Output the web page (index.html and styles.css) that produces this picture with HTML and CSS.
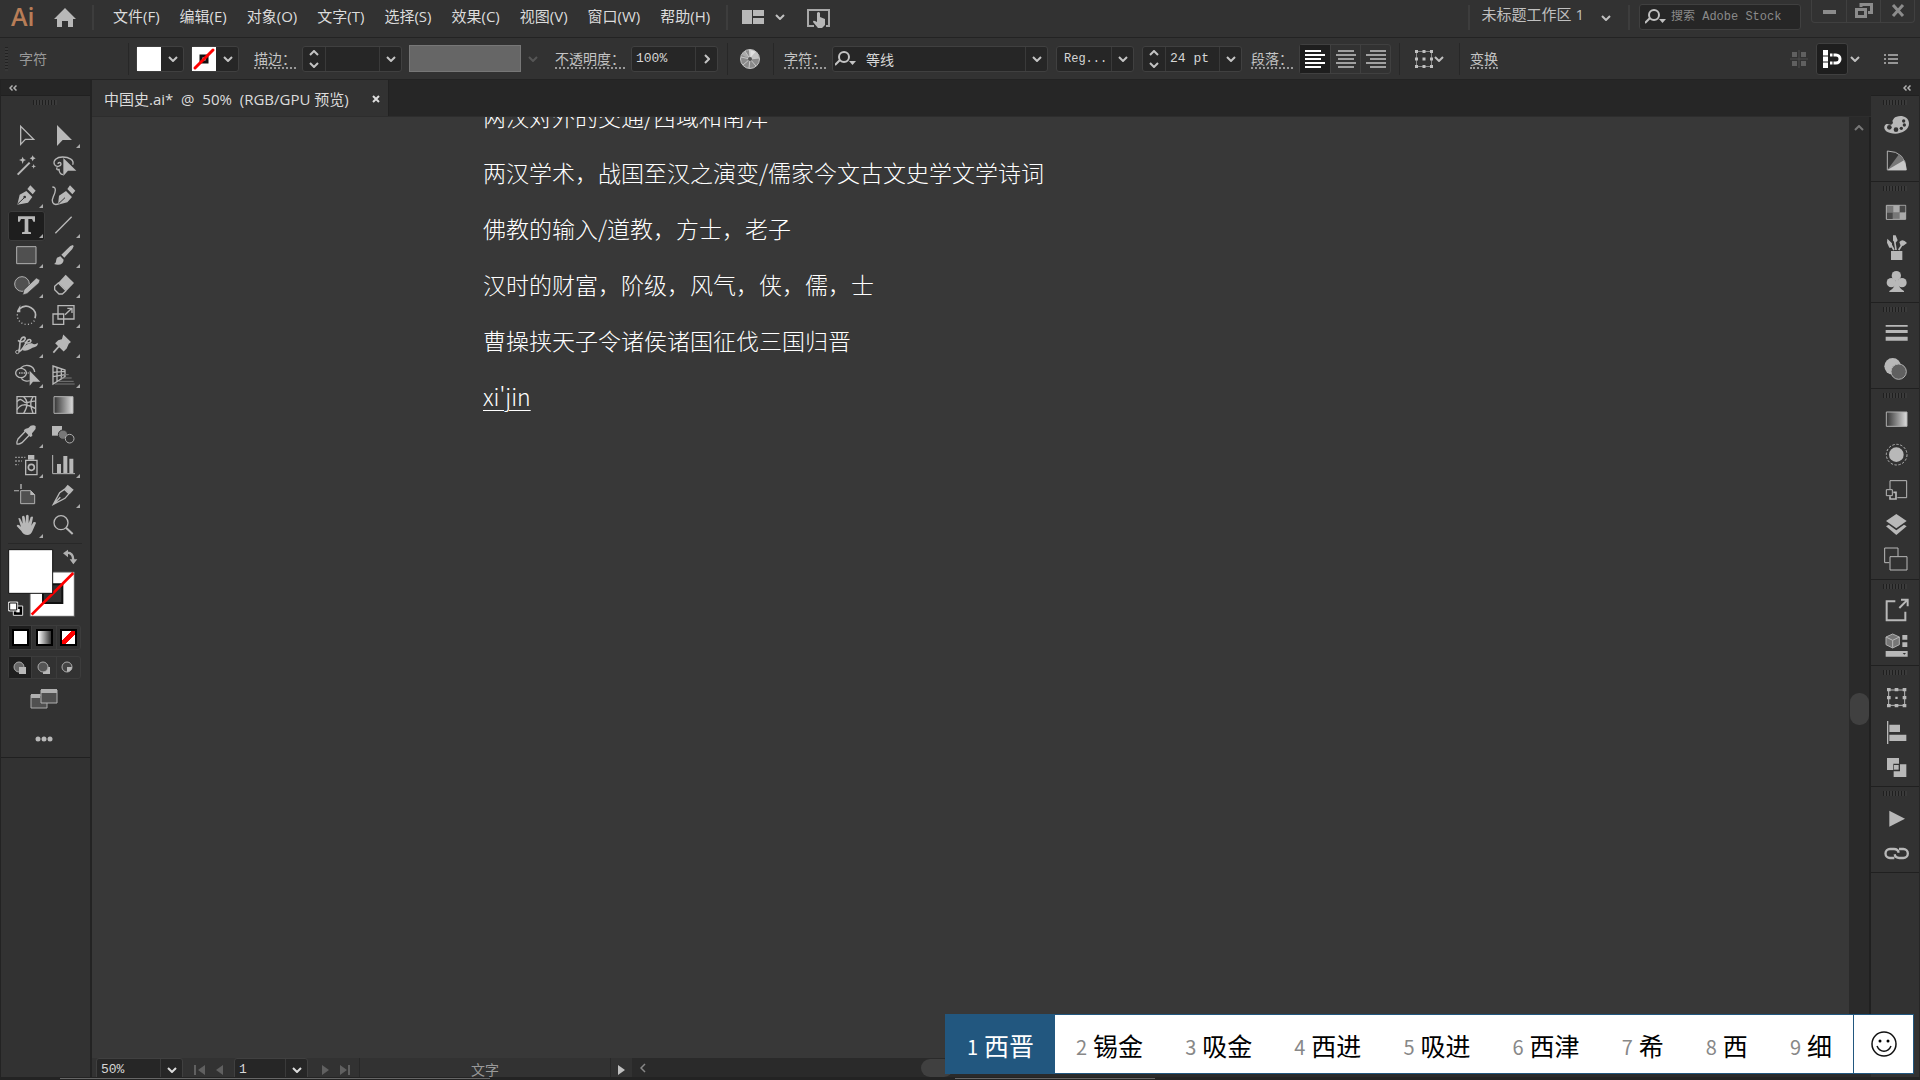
FILE: index.html
```
<!DOCTYPE html>
<html lang="zh-CN">
<head>
    <meta charset="UTF-8">
    <meta name="viewport" content="width=device-width, initial-scale=1.0">
    <title>中国史.ai</title>
    <link rel="stylesheet" href="styles.css">
</head>
<body>
    <svg class="defs" aria-hidden="true">
        <symbol id="down" viewBox="0 0 10 6"><path d="M1 1l4 4 4-4" fill="none" stroke="currentColor" stroke-width="2"/></symbol>
        <symbol id="up" viewBox="0 0 10 6"><path d="M1 5l4-4 4 4" fill="none" stroke="currentColor" stroke-width="2"/></symbol>
        <symbol id="find" viewBox="0 0 22 16"><g fill="none" stroke="currentColor" stroke-width="2"><circle cx="9" cy="6" r="5"/><path d="M5 9l-5 5"/></g><path d="M14 10h7l-3.500 4z" fill="currentColor"/></symbol>
        <symbol id="collapse" viewBox="0 0 8 6"><path d="M3.500 0.500L1 3l2.500 2.500M7.500 0.500L5 3l2.500 2.500" fill="none" stroke="currentColor" stroke-width="1.500"/></symbol>
    </svg>

    <!-- Меню -->
    <header class="menubar">
        <span class="logo">Ai</span>
        <button class="icon-btn home" aria-label="主页"><svg width="22" height="20" viewBox="0 0 22 20"><path d="M11 0l11 11h-3v8h-5v-6H8v6H3v-8H0z" fill="#b8b8b8"/></svg></button>
        <span class="sep"></span>
        <nav class="menu">
            <button>文件(F)</button>
            <button>编辑(E)</button>
            <button>对象(O)</button>
            <button>文字(T)</button>
            <button>选择(S)</button>
            <button>效果(C)</button>
            <button>视图(V)</button>
            <button>窗口(W)</button>
            <button>帮助(H)</button>
        </nav>
        <span class="sep"></span>
        <button class="icon-btn arrange" aria-label="排列文档">
            <svg width="22" height="15" viewBox="0 0 22 15"><path d="M0 0h10v14H0zM11 0h11v6H11zM11 8h11v6H11z" fill="#b8b8b8"/></svg>
            <svg width="10" height="6"><use href="#down"/></svg>
        </button>
        <button class="icon-btn touch" aria-label="触控"><svg width="23" height="19" viewBox="0 0 23 19"><path d="M7 17H1V1h21v16h-3" fill="none" stroke="#a8a8a8" stroke-width="2"/><path d="M10 4q1.500-2 3 0v4l5 2v6l-3 3h-4l-5-6q0-2 2-1l2 1z" fill="#b8b8b8"/></svg></button>
        <span class="grow"></span>
        <span class="sep"></span>
        <button class="icon-btn workspace">未标题工作区 1 <svg width="10" height="6"><use href="#down"/></svg></button>
        <span class="sep"></span>
        <label class="search"><svg width="22" height="16"><use href="#find"/></svg><input type="text" placeholder="搜索 Adobe Stock" aria-label="搜索 Adobe Stock"></label>
        <div class="window-btns">
            <button aria-label="最小化"><svg width="18" height="16"><path d="M3 7h13v4H3z" fill="#8c8c8c"/></svg></button>
            <button aria-label="还原"><svg width="18" height="16" fill="none" stroke="#8c8c8c" stroke-width="3"><path d="M6 4V1.500h10.500v8H13"/><path d="M1.500 6.500h9v7h-9z"/></svg></button>
            <button aria-label="关闭"><svg width="18" height="16"><path d="M4 2l10 11M14 2L4 13" stroke="#8c8c8c" stroke-width="3"/></svg></button>
        </div>
    </header>

    <!-- Панель управления -->
    <section class="control">
        <span class="grip-v"></span>
        <span class="title">字符</span>
        <span class="sep"></span>
        <button class="swatch" aria-label="填色"><i class="chip"></i><svg width="10" height="6"><use href="#down"/></svg></button>
        <button class="swatch" aria-label="描边色"><svg class="chip" width="24" height="24" viewBox="0 0 24 24"><path d="M0 0h24v24H0z" fill="#fff"/><path d="M9 9h6v6H9z" fill="#fff" stroke="#111" stroke-width="3"/><path d="M3 21L21 3" stroke="#f00" stroke-width="3" stroke-linecap="round"/></svg><svg width="10" height="6"><use href="#down"/></svg></button>
        <label class="name" for="stroke">描边：</label>
        <div class="combo">
            <button class="step" aria-label="增减"><svg width="10" height="6"><use href="#up"/></svg><svg width="10" height="6"><use href="#down"/></svg></button>
            <input id="stroke" class="w54" type="text">
            <button aria-label="描边粗细"><svg width="10" height="6"><use href="#down"/></svg></button>
        </div>
        <button class="profile" aria-label="配置文件" disabled><i></i><svg width="10" height="6"><use href="#down"/></svg></button>
        <label class="name" for="opacity">不透明度：</label>
        <div class="combo">
            <input id="opacity" class="w64" type="text" value="100%">
            <button aria-label="不透明度滑块"><svg width="6" height="10"><path d="M1 1l4 4-4 4" fill="none" stroke="currentColor" stroke-width="2"/></svg></button>
        </div>
        <span class="sep"></span>
        <button class="icon-btn recolor" aria-label="重新着色"><svg width="20" height="20" viewBox="0 0 20 20"><circle cx="10" cy="10" r="9.500" fill="#8a8a8a" stroke="#c4c4c4"/><path d="M10 10L9 1a9 9 0 017 2z" fill="#e0e0e0"/><path d="M10 10l6-7a9 9 0 013 6z" fill="#c4c4c4"/><path d="M10 10L2 6a9 9 0 013-4z" fill="#aaa"/><path d="M10 10l9-1M10 10l6 7M10 10l-1 9M10 10l-7 6M10 10L1 8M10 10L5 2M10 10l0-9M10 10l6-7" stroke="#c8c8c8"/><circle cx="10" cy="10" r="2" fill="#555"/></svg></button>
        <span class="sep"></span>
        <label class="name" for="font">字符：</label>
        <div class="combo font">
            <svg width="22" height="16"><use href="#find"/></svg>
            <input id="font" type="text" value="等线">
            <button aria-label="字体列表"><svg width="10" height="6"><use href="#down"/></svg></button>
        </div>
        <div class="combo">
            <input class="w54 small" type="text" value="Reg..." aria-label="字体样式">
            <button aria-label="样式列表"><svg width="10" height="6"><use href="#down"/></svg></button>
        </div>
        <div class="combo">
            <button class="step" aria-label="增减"><svg width="10" height="6"><use href="#up"/></svg><svg width="10" height="6"><use href="#down"/></svg></button>
            <input class="w54" type="text" value="24 pt" aria-label="字号">
            <button aria-label="字号列表"><svg width="10" height="6"><use href="#down"/></svg></button>
        </div>
        <a class="name" href="#">段落：</a>
        <div class="align">
            <button class="active" aria-label="左对齐"><svg width="20" height="18" viewBox="0 0 20 18"><path d="M0 1h16M0 5h20M0 9h16M0 13h20M0 17h16"/></svg></button>
            <button aria-label="居中对齐"><svg width="20" height="18" viewBox="0 0 20 18"><path d="M2 1h16M0 5h20M2 9h16M0 13h20M2 17h16"/></svg></button>
            <button aria-label="右对齐"><svg width="20" height="18" viewBox="0 0 20 18"><path d="M4 1h16M0 5h20M4 9h16M0 13h20M4 17h16"/></svg></button>
        </div>
        <span class="sep"></span>
        <button class="icon-btn envelope" aria-label="制作封套"><svg width="18" height="18" viewBox="0 0 18 18"><path d="M1.500 1.500h15v15h-15z" fill="none" stroke="#888"/><path d="M0 0h3v3H0zM7.500 0h3v3h-3zM15 0h3v3h-3zM0 7.500h3v3H0zM7.500 7.500h3v3h-3zM15 7.500h3v3h-3zM0 15h3v3H0zM7.500 15h3v3h-3zM15 15h3v3h-3z" fill="#c0c0c0"/></svg><svg width="10" height="6"><use href="#down"/></svg></button>
        <span class="sep"></span>
        <a class="name" href="#">变换</a>
        <span class="grow"></span>
        <button class="icon-btn" aria-label="对齐像素" disabled><svg width="18" height="18" viewBox="0 0 18 18"><path d="M2 2h5v5H2zM11 2h5v5h-5zM2 11h5v5H2zM11 11h5v5h-5z" fill="#606060"/><path d="M9 0v18M0 9h18" stroke="#4c4c4c"/></svg></button>
        <button class="snap" aria-label="对齐"><svg width="20" height="20" viewBox="0 0 20 20"><path d="M1 1h5v18H1z" fill="#fff"/><path d="M1 7h5M1 13h5" stroke="#222"/><path d="M8 6h6a4 4 0 010 8H8" fill="none" stroke="#fff" stroke-width="3"/><path d="M11 4v12" stroke="#222"/></svg></button>
        <button class="icon-btn more" aria-label="对齐选项"><svg width="10" height="6"><use href="#down"/></svg></button>
        <button class="icon-btn list" aria-label="面板菜单"><svg width="14" height="10" viewBox="0 0 14 10"><path d="M0 1h2M4 1h10M0 5h2M4 5h10M0 9h2M4 9h10" stroke="#b8b8b8" stroke-width="1.500"/></svg></button>
    </section>

    <main class="main">
        <!-- Инструменты -->
        <aside class="tools">
            <button class="collapse" aria-label="折叠"><svg width="8" height="6"><use href="#collapse"/></svg></button>
            <div class="tools-body">
                <span class="grip"></span>
                <div class="tool-grid">
                    <button aria-label="选择"><svg viewBox="24 123 111 90"><path d="M62 139v54l14-15h25z" class="line w4"/></svg></button>
                    <button class="sub" aria-label="直接选择"><svg viewBox="135 123 111 90"><path d="M171 135v63l17-18h28z"/></svg></button>
                    <button aria-label="魔棒"><svg viewBox="24 213 111 90"><path d="M53 284l36-36" class="line w6"/><path d="M68 230l3 7 7 3-7 3-3 9-3-9-8-3 8-3zM98 226l3 6 6 3-6 3-3 6-3-6-6-3 6-3zM101 252l2 5 5 2-5 2-2 5-2-5-5-2 5-2z"/></svg></button>
                    <button aria-label="套索"><svg viewBox="135 213 111 90"><path d="M218 254c6-14-11-23-30-23s-29 11-25 22c4 10 20 6 20-1 0-6-9-6-9 0M172 262c-6 8 5 10 5 4 0 9 2 16 12 18" class="line w4"/><path d="M190 234v54l14-16h25z"/></svg></button>
                    <button class="sub" aria-label="钢笔"><svg viewBox="24 303 111 90"><path d="M52 374l7-30 20-11 18 18-13 17zM82 327l9-11 16 16-9 11z"/><path d="M53 372l19-18" stroke="#323232" stroke-width="3"/><circle cx="74" cy="351" r="4" fill="#323232"/></svg></button>
                    <button aria-label="曲率"><svg viewBox="135 303 111 90"><path d="M157 321c14 0 9 17 3 29s-4 28 15 22" class="line w4"/><path d="M174 374l3-27 21-14 18 18-14 16zM202 327l8-11 16 16-9 11z"/><path d="M176 371l19-18" stroke="#323232" stroke-width="3"/></svg></button>
                    <button class="sub active" aria-label="文字"><svg viewBox="24 393 111 90"><path d="M54 409h51v16h-5l-4-8H85v38l8 2v5H66v-5l8-2v-38H63l-4 8h-5z"/></svg></button>
                    <button class="sub" aria-label="直线段"><svg viewBox="135 393 111 90"><path d="M166 460l49-50" class="line w4"/></svg></button>
                    <button class="sub" aria-label="矩形"><svg viewBox="24 483 111 90"><path d="M50 500h58v51H50z" fill="#505050" class="edge"/></svg></button>
                    <button class="sub" aria-label="画笔"><svg viewBox="135 483 111 90"><path d="M184 524l27-26 8-3 2 4-4 8-24 26zM181 529l10 10c-1 13-12 19-29 13 8-3 5-12 9-19z"/></svg></button>
                    <button class="sub" aria-label="Shaper"><svg viewBox="24 573 111 90"><circle cx="66" cy="612" r="22" fill="#505050" class="edge"/><path d="M68 645l4-16 37-35 11 6-3 9-36 32z" stroke="#323232" stroke-width="2"/></svg></button>
                    <button class="sub" aria-label="橡皮擦"><svg viewBox="135 573 111 90"><path d="M197 584l25 25-22 23-25-24z"/><path d="M175 609l-11 10v10l13 13h10l11-10z" class="line w4"/></svg></button>
                    <button class="sub" aria-label="旋转"><svg viewBox="24 663 111 90"><path d="M58 687c22-20 56 0 47 28" class="line w5"/><path d="M61 675v22H51v-5z"/><path d="M52 703c-2 34 43 40 53 15" class="line w4" stroke-dasharray="3 7"/></svg></button>
                    <button class="sub" aria-label="缩放"><svg viewBox="135 663 111 90"><path d="M174 677h48v40h-48zM159 702h32v31h-32z" class="line w4"/><path d="M195 704l19-18M202 685h14v14" class="line w4"/></svg></button>
                    <button class="sub" aria-label="宽度"><svg viewBox="24 -27 111 90"><path d="M52 36c12-6 4-24 10-36 5-12 16-10 13-2-4 9-14 9-21 3M53 36c14 0 20-20 29-34 6-7 14-2 9 4-5 5-12 3-17 1" class="line w5"/><path d="M66 30q12-22 30-20 8 6 17-2 2 9-8 13-8 2-14 6-14 8-25 3z"/><circle cx="52" cy="36" r="5" fill="#323232" class="edge"/></svg></button>
                    <button class="sub" aria-label="操控变形"><svg viewBox="135 -27 111 90"><path d="M191-12l18 18-5 4-6 14-7 7-22-21 7-7 12-4zM176 20l-16 18" stroke="#b8b8b8" stroke-width="5"/></svg></button>
                    <button class="sub" aria-label="形状生成器"><svg viewBox="24 63 111 90"><ellipse cx="63" cy="99" rx="16" ry="14" class="line w4"/><path d="M62 84c15-14 40-8 42 12M64 115c6 8 17 10 25 7" class="line w4"/><path d="M57 99h30" class="line w4" stroke-dasharray="4 3"/><path d="M89 92v45l10-12h22z"/></svg></button>
                    <button class="sub" aria-label="透视网格"><svg viewBox="135 63 111 90"><path d="M159 78v54l36-22V90zM159 97l36-3M159 110l36-6M171 82v42M184 86v30" class="line w4"/><path d="M193 104h13M184 114h31M176 124h45M164 132h60" stroke="#777" stroke-width="3"/></svg></button>
                    <button aria-label="网格"><svg viewBox="24 153 111 90"><path d="M51 170h56v50H51z" class="line w4"/><path d="M71 170c16 14 10 34 0 50M99 170c-10 13-8 30 0 50M51 185c12-14 15-2 24 2s20-6 32-3M51 209c12-20 28-18 56-3" class="line w4"/></svg></button>
                    <button aria-label="渐变"><svg viewBox="135 153 111 90"><defs><linearGradient id="g"><stop stop-color="#333"/><stop offset="1" stop-color="#ddd"/></linearGradient></defs><path d="M162 170h57v50h-57z" fill="url(#g)" class="edge"/></svg></button>
                    <button class="sub" aria-label="吸管"><svg viewBox="24 243 111 90"><path d="M79 271l-25 26q-5 10-3 15 6 2 15-4l26-27" class="line w4"/><path d="M77 266l8-2 7-7q10-4 15 2 2 9-5 14l-6 7 1 8-6 3-20-20z"/></svg></button>
                    <button aria-label="混合"><svg viewBox="135 243 111 90"><path d="M156 258h30v29h-30z"/><circle cx="189" cy="284" r="14" fill="#777" stroke="#323232" stroke-width="3"/><circle cx="209" cy="296" r="13" fill="#323232" class="edge"/></svg></button>
                    <button class="sub" aria-label="符号喷枪"><svg viewBox="24 333 111 90"><path d="M77 361h34v43H77z" class="line w4"/><path d="M84 345h19v14H84z"/><circle cx="94" cy="382" r="9" class="line w5"/><path d="M46 352h30M46 363h20M46 374h10" class="line w4" stroke-dasharray="4 5"/></svg></button>
                    <button class="sub" aria-label="柱形图"><svg viewBox="135 333 111 90"><path d="M158 345v56h67" class="line w3"/><path d="M171 372h12v27h-12zM190 348h12v51h-12zM208 356h12v43h-12z"/></svg></button>
                    <button aria-label="画板"><svg viewBox="24 423 111 90"><path d="M62 452h30l12 12v27H62z" fill="#505050" class="edge"/><path d="M91 451l14 14H91zM42 451h15v3H42zM61 432h4v15h-4z"/></svg></button>
                    <button class="sub" aria-label="切片"><svg viewBox="135 423 111 90"><path d="M160 493l19-35 14-10 14 13-12 14zM161 492l20-20" class="line w4"/><path d="M193 446l10-12 18 15-12 14z"/></svg></button>
                    <button class="sub" aria-label="抓手"><svg viewBox="24 513 111 90"><path d="M55 535q5-3 8 5l5 11-2-21q4-5 8 0l3 20 1-23q4-5 8 0v23l6-19q6-4 7 1l-5 25 6-10q7-3 8 2l-11 25q-4 11-15 11-12 0-18-12L50 558q2-6 8-2l5 5z"/></svg></button>
                    <button aria-label="缩放显示"><svg viewBox="135 513 111 90"><circle cx="183" cy="548" r="21" class="line w4"/><path d="M198 563l20 19" class="line w6"/></svg></button>
                </div>
                <svg class="colors" width="74" height="72" viewBox="24 24 222 216" role="img" aria-label="填色和描边">
                    <path d="M90 96h133v133H90z" fill="#fff" stroke="#555" stroke-width="3"/><path d="M129 133h58v56h-58z" fill="#323232" stroke="#111" stroke-width="6"/><path d="M95 224L220 99" stroke="#f00" stroke-width="8"/>
                    <path d="M26 29h132v131H26z" fill="#fff" stroke="#111" stroke-width="3"/>
                    <path d="M201 38c14 0 19 8 19 23" fill="none" stroke="#b0b0b0" stroke-width="7"/><path d="M204 29v23l-15-12zM209 58h23l-12 15z" fill="#b0b0b0"/>
                    <path d="M40 198h28v28H40z" fill="#000" stroke="#ddd" stroke-width="3"/><path d="M49 207h10v10H49z" fill="#fff"/><path d="M26 186h27v27H26z" fill="#fff" stroke="#ddd" stroke-width="3"/><path d="M29 189h21v21H29z" fill="#fff" stroke="#111" stroke-width="3"/>
                </svg>
                <div class="modes">
                    <button class="active" aria-label="颜色"><i class="solid"></i></button>
                    <button aria-label="渐变填色"><i class="fade"></i></button>
                    <button aria-label="无"><i class="none"></i></button>
                </div>
                <div class="modes draw">
                    <button class="active" aria-label="正常绘图"><svg width="14" height="14"><circle cx="6" cy="6" r="5" fill="#666" stroke="#aaa"/><path d="M6 6h7v7H6z" fill="#b8b8b8" stroke="none"/></svg></button>
                    <button aria-label="背面绘图"><svg width="14" height="14"><path d="M6 6h7v7H6z" fill="#b8b8b8"/><circle cx="6" cy="6" r="5" fill="#555" stroke="#aaa"/></svg></button>
                    <button aria-label="内部绘图"><svg width="14" height="14"><circle cx="6" cy="6" r="5" fill="#444" stroke="#aaa"/><path d="M6 6h5q0 4-5 5z" fill="#b8b8b8"/></svg></button>
                </div>
                <button class="screen" aria-label="屏幕模式"><svg width="28" height="20"><path d="M1 6h16v13H1z" fill="#505050" stroke="#aaa"/><path d="M1 5h9v4H1z" fill="#b0b0b0"/><path d="M11 1h16v13H11z" fill="#505050" stroke="#b0b0b0"/><path d="M11 0h16v4H11z" fill="#b0b0b0"/></svg></button>
                <button class="dots" aria-label="编辑工具栏"><svg width="18" height="6" fill="#b8b8b8"><circle cx="3" cy="3" r="2.500"/><circle cx="9" cy="3" r="2.500"/><circle cx="15" cy="3" r="2.500"/></svg></button>
            </div>
        </aside>

        <!-- Документ -->
        <section class="document">
            <div class="tabs">
                <div class="tab"><span>中国史.ai*  @  50%  (RGB/GPU 预览)</span><button aria-label="关闭文档"><svg width="8" height="8"><path d="M1 1l6 6M7 1L1 7" stroke="#ddd" stroke-width="2"/></svg></button></div>
            </div>
            <div class="view">
                <article class="canvas">
                    <p>两汉对外的交通/西域和南洋</p>
                    <p>两汉学术，战国至汉之演变/儒家今文古文史学文学诗词</p>
                    <p>佛教的输入/道教，方士，老子</p>
                    <p>汉时的财富，阶级，风气，侠，儒，士</p>
                    <p>曹操挟天子令诸侯诸国征伐三国归晋</p>
                    <p><u>xi'jin</u></p>
                </article>
                <div class="scroll-v"><svg width="10" height="6"><use href="#up"/></svg><i></i></div>
            </div>
            <footer class="status">
                <div class="combo">
                    <input class="w64" type="text" value="50%" aria-label="缩放比例">
                    <button aria-label="缩放列表"><svg width="10" height="6"><use href="#down"/></svg></button>
                </div>
                <button class="nav" aria-label="首页" disabled><svg width="12" height="10"><path d="M0 0h2v10H0zM11 0v10L4 5z"/></svg></button>
                <button class="nav" aria-label="上一页" disabled><svg width="12" height="10"><path d="M9 0v10L2 5z"/></svg></button>
                <div class="combo">
                    <input class="w50" type="text" value="1" aria-label="画板">
                    <button aria-label="画板列表"><svg width="10" height="6"><use href="#down"/></svg></button>
                </div>
                <button class="nav" aria-label="下一页" disabled><svg width="12" height="10"><path d="M3 0v10l7-5z"/></svg></button>
                <button class="nav" aria-label="末页" disabled><svg width="12" height="10"><path d="M1 0v10l7-5zM9 0h2v10H9z"/></svg></button>
                <span class="current">文字</span>
                <button class="play" aria-label="状态菜单"><svg width="8" height="10"><path d="M0 0v10l7-5z"/></svg></button>
                <div class="scroll-h"><svg width="6" height="10"><path d="M5 1L1 5l4 4" fill="none" stroke="#888" stroke-width="1.500"/></svg><i></i></div>
            </footer>
        </section>

        <!-- Панели -->
        <aside class="dock">
            <button class="collapse" aria-label="展开"><svg width="8" height="6"><use href="#collapse"/></svg></button>
            <div class="group"><span class="grip"></span>
                <button aria-label="颜色"><svg viewBox="93 84 147 105"><path d="M162 115c8-10 44-12 45 15 1 24-31 36-56 29-26-7-19-29-8-27 10 6 20-1 14-9z"/><g fill="#323232"><circle cx="148" cy="142" r="7"/><circle cx="168" cy="149" r="7"/><circle cx="184" cy="145" r="5"/><circle cx="193" cy="135" r="5"/><circle cx="191" cy="123" r="5"/></g></svg></button>
                <button aria-label="颜色参考"><svg viewBox="93 189 147 105"><path d="M142 213q55 1 57 57h-57z" fill="#333" class="edge"/><path d="M142 270l35-47q22 18 22 47z" fill="#777"/><path d="M142 270l50-29q7 12 7 29z" fill="#c8c8c8"/></svg></button>
            </div>
            <div class="group"><span class="grip"></span>
                <button aria-label="色板"><svg viewBox="93 342 147 105"><path d="M139 376h58v42h-58z" fill="#777" class="edge"/><path d="M160 377h18v20h-18zM179 398h18v19h-18z" fill="#aaa"/><path d="M180 377h16v19h-16zM141 398h17v19h-17z" fill="#484848"/></svg></button>
                <button aria-label="画笔"><svg viewBox="93 447 147 105"><path d="M153 513h34v27h-34z"/><path d="M162 510l-12-21M168 510l-4-27M176 510l13-20" class="line w5"/><path d="M142 476l14 14-1 13h-7l-7-15zM159 466l8 0 6 15-6 7-8-6zM178 486q10-12 23 3l-11 8h-8z"/></svg></button>
                <button aria-label="符号"><svg viewBox="93 552 147 105"><circle cx="169" cy="587" r="14"/><circle cx="154" cy="608" r="14"/><circle cx="186" cy="608" r="14"/><path d="M166 600h8q0 25 18 33v3h-44v-3q18-8 18-33z"/></svg></button>
            </div>
            <div class="group"><span class="grip"></span>
                <button aria-label="描边"><svg viewBox="93 705 147 105"><path d="M137 735h66v5h-66zM137 750h66v9h-66zM137 770h66v12h-66z"/></svg></button>
                <button aria-label="透明度"><svg viewBox="93 810 147 105"><circle cx="158" cy="859" r="25"/><circle cx="176" cy="875" r="23" fill="#606060" class="edge"/></svg></button>
            </div>
            <div class="group"><span class="grip"></span>
                <button aria-label="渐变"><svg viewBox="93 63 147 105"><path d="M139 96h62v43h-62z" fill="url(#g)" class="edge"/></svg></button>
                <button aria-label="外观"><svg viewBox="93 168 147 105"><circle cx="169" cy="224" r="22"/><circle cx="170" cy="224" r="31" class="line w3" stroke-dasharray="7 5"/></svg></button>
                <button aria-label="资源"><svg viewBox="93 273 147 105"><path d="M150 327v-25h50v51h-28M139 329h18v18h-18z" class="line w3"/><path d="M160 337h8v20h-18v-8" class="line w5"/></svg></button>
                <button aria-label="图层"><svg viewBox="93 378 147 105"><path d="M169 402l31 21-31 22-31-22zM138 439l8-5 23 17 23-17 8 5-31 26z"/></svg></button>
                <button aria-label="画板"><svg viewBox="93 483 147 105"><path d="M148 548h-14v-44h40v25M150 530h51v40h-51z" class="line w3"/></svg></button>
            </div>
            <div class="group"><span class="grip"></span>
                <button aria-label="导出"><svg viewBox="93 636 147 105"><path d="M166 664h-26v57h56v-26" class="line w6"/><path d="M178 684l22-22M183 659h20v20" class="line w6"/></svg></button>
                <button aria-label="库"><svg viewBox="93 741 147 105"><path d="M158 762l20 9v23l-20 10-20-10v-23z" fill="#777" class="edge"/><path d="M138 771l20 10 20-10M158 781v22" class="line w3"/><path d="M187 765h15v14h-15zM187 787h15v14h-15zM137 813h66v17h-66z"/><path d="M188 819h10l-5 5z" fill="#323232"/></svg></button>
            </div>
            <div class="group"><span class="grip"></span>
                <button aria-label="变换"><svg viewBox="93 114 147 105"><path d="M146 150h48v46h-48z" class="line w3"/><path d="M141 144h11v10h-11zM164 144h11v10h-11zM188 144h11v10h-11zM141 168h11v10h-11zM188 168h11v10h-11zM141 192h11v10h-11zM164 192h11v10h-11zM188 192h11v10h-11zM166 170h7v7h-7z"/></svg></button>
                <button aria-label="对齐"><svg viewBox="93 219 147 105"><path d="M141 243h4v69h-4zM148 254h32v22h-32zM148 284h51v19h-51z"/></svg></button>
                <button aria-label="路径查找器"><svg viewBox="93 324 147 105"><path d="M141 354h36v17h-17v19h-19zM180 373h19v38h-38v-17h19z"/><path d="M162 375h14v14h-14z"/></svg></button>
            </div>
            <div class="group"><span class="grip"></span>
                <button aria-label="动作"><svg viewBox="93 477 147 105"><path d="M148 512v48l47-24z"/></svg></button>
                <button aria-label="链接"><svg viewBox="93 582 147 105"><path d="M163 654h-13a13 13 0 010-27h12q12 0 14 11M177 627h13a13 13 0 010 27h-12q-12 0-14-11" class="line w7"/></svg></button>
            </div>
        </aside>
    </main>
    <div class="bottom"><i></i><i></i></div>

    <!-- Окно ввода пиньинь -->
    <div class="ime">
        <button class="active"><b>1</b>西晋</button>
        <button><b>2</b>锡金</button>
        <button><b>3</b>吸金</button>
        <button><b>4</b>西进</button>
        <button><b>5</b>吸进</button>
        <button><b>6</b>西津</button>
        <button><b>7</b>希</button>
        <button><b>8</b>西</button>
        <button><b>9</b>细</button>
        <button class="smile" aria-label="表情"><svg width="26" height="26" viewBox="0 0 26 26"><circle cx="13" cy="13" r="12" fill="none" stroke="#111" stroke-width="1.500"/><circle cx="9" cy="10" r="1.500"/><circle cx="17" cy="10" r="1.500"/><path d="M6 15c3 7 11 7 14 0" fill="none" stroke="#111" stroke-width="1.500"/></svg></button>
    </div>
</body>
</html>
```
FILE: styles.css
```
* { box-sizing: border-box; }
body { margin: 0; height: 100vh; display: flex; flex-direction: column; overflow: hidden; background: #323232; color: #dcdcdc; font: 15px/20px "Open Sans", "Noto Sans CJK SC", sans-serif; }
button, input { font: inherit; color: inherit; background: none; border: 0; margin: 0; padding: 0; outline: none; }
button { cursor: pointer; display: flex; align-items: center; justify-content: center; white-space: nowrap; }
a { color: inherit; text-decoration: none; }
svg { flex: none; display: block; }
.defs { position: absolute; width: 0; height: 0; }
.grow { flex: 1; }
.icon-btn { color: #c0c0c0; }

/* menu */
.menubar { height: 38px; flex: none; display: flex; align-items: flex-start; border-bottom: 1px solid #232323; }
.menubar .sep { width: 2px; height: 25px; margin-top: 5px; background: #3d3d3d; }
.logo { width: 32px; margin-left: 11px; color: #b87d57; font-size: 25px; line-height: 32px; font-weight: 600; }
.home { width: 44px; height: 36px; margin-right: 5px; }
.menu { display: flex; gap: 20px; padding: 0 16px 0 19px; height: 32px; }
.arrange { gap: 11px; height: 34px; margin: 0 22px 0 14px; }
.touch { height: 36px; }
.workspace { gap: 17px; height: 28px; margin: 0 17px 0 12px; }
.workspace svg { margin-top: 8px; }
.search { display: flex; align-items: center; width: 162px; height: 26px; margin: 4px 10px 0 9px; padding-left: 5px; background: #262626; border: 1px solid #404040; border-radius: 3px; color: #c0c0c0; }
.search input { width: 130px; margin-left: 4px; font: 12px "Liberation Mono", "Noto Sans CJK SC", monospace; }
.search input::placeholder { color: #8a8a8a; opacity: 1; }
.window-btns { display: flex; height: 23px; margin-right: 5px; border: 1px solid #404040; border-top: 0; border-radius: 0 0 4px 4px; }
.window-btns button { width: 34px; }
.window-btns button + button { border-left: 1px solid #404040; }

/* control */
.control { height: 42px; flex: none; display: flex; align-items: center; border-bottom: 1px solid #232323; color: #c4c4c4; font-size: 14px; }
.control .sep { width: 1px; height: 32px; background: #272727; }
.grip-v { width: 3px; height: 24px; margin: 0 11px 0 5px; background: repeating-linear-gradient(#222 0 1px, #383838 1px 3px); }
.title { width: 109px; color: #999; }
.swatch { height: 26px; width: 48px; margin-left: 7px; justify-content: flex-start; gap: 7px; background: #262626; border: 1px solid #404040; border-radius: 3px; }
.swatch .chip { width: 24px; height: 24px; background: #fff; }
.name { line-height: 20px; border-bottom: 2px dotted #999; height: 20px; margin: 0 6px 0 9px; white-space: nowrap; }
.swatch + .name { margin-left: 15px; }
.combo { display: flex; height: 26px; background: #262626; border: 1px solid #404040; border-radius: 3px; font-family: "Liberation Mono", "Noto Sans CJK SC", monospace; font-size: 13px; }
.combo button { width: 22px; }
.combo > * + * { border-left: 1px solid #3a3a3a; }
.combo + .combo { margin-left: 8px; }
.combo input { padding-left: 4px; color: #d6d6d6; }
.combo .step { flex-direction: column; gap: 6px; }
.w50 { width: 50px; }
.w54 { width: 54px; }
.w64 { width: 63px; }
.small { font-size: 12px; }
.combo input.small { padding-left: 7px; }
.font { width: 216px; align-items: center; padding-left: 2px; }
.font input { flex: 1; min-width: 0; height: 24px; border: 0; font-size: 14px; padding-left: 9px; }
.font button { height: 24px; }
.profile { margin-left: 7px; color: #555; }
.profile i { width: 112px; height: 27px; margin-right: 7px; background: #666; border: 1px solid #777; }
.profile svg { margin-right: 8px; }
.recolor { margin: 0 13px 0 12px; }
.combo + .sep { margin-left: 9px; }
.sep + .name { margin-left: 10px; }
.align { display: flex; height: 30px; margin-right: 8px; border: 1px solid #404040; border-radius: 3px; }
.align button { width: 30px; stroke: #a0a0a0; stroke-width: 2; }
.align button + button { border-left: 1px solid #404040; }
.align .active, .modes .active { background: #1e1e1e; stroke: #fff; }
.envelope { margin: 0 15px; gap: 1px; }
.snap { width: 32px; height: 32px; margin-left: 8px; background: #1e1e1e; border: 1px solid #404040; border-radius: 3px; }
.more { margin: 0 24px 0 2px; }
.list { margin-right: 22px; }

.main { flex: 1; min-height: 0; display: flex; }
.collapse { height: 16px; flex: none; background: #262626; border-bottom: 1px solid #202020; color: #b0b0b0; }
.grip { display: block; width: 24px; height: 5px; margin: 4px auto 0; background: repeating-linear-gradient(90deg, #1f1f1f 0 1px, #3a3a3a 1px 3px); }

/* tools */
.tools { width: 92px; flex: none; border: solid #232323; border-width: 0 2px 0 1px; }
.tools .collapse { width: 100%; justify-content: flex-start; padding-left: 8px; }
.tools-body { border-bottom: 1px solid #202020; padding: 0 8px 15px 7px; }
.tool-grid { display: grid; grid-template-columns: 37px 37px; grid-auto-rows: 30px; padding: 16px 0 2px; border-bottom: 1px solid #282828; }
.tool-grid button { position: relative; }
.tool-grid svg { width: 37px; height: 30px; }
.tool-grid .active { background: #1e1e1e; border-radius: 3px; box-shadow: inset 0 0 0 1px #3c3c3c; }
.sub::after { content: ""; position: absolute; right: 2px; bottom: 3px; border: solid transparent; border-width: 2px; border-right-color: #aaa; border-bottom-color: #aaa; }
.tool-grid svg, .group svg { fill: #b8b8b8; }
svg .line { fill: none; stroke: #b8b8b8; }
svg .edge { stroke: #b0b0b0; stroke-width: 3; }
.w3 { stroke-width: 3; }
.w4 { stroke-width: 4; }
.w5 { stroke-width: 5; }
.w6 { stroke-width: 6; }
.w7 { stroke-width: 7; }
.colors { margin-top: 4px; }
.modes { display: flex; width: 73px; height: 25px; margin-top: 5px; border: 1px solid #3c3c3c; border-radius: 3px; }
.modes button { width: 25px; }
.modes button:first-child { width: 23px; }
.modes button + button { border-left: 1px solid #3c3c3c; }
.modes i { width: 17px; height: 17px; border: 2px solid #000; background: #fff; }
.modes .fade { background: linear-gradient(90deg, #fff, #333); }
.modes .none { background: linear-gradient(135deg, #fff 38%, #f00 38% 62%, #fff 62%); }
.draw { height: 23px; margin-top: 6px; }
.screen { margin: 10px 0 0 22px; }
.dots { margin: 27px 0 0 27px; }

/* document */
.document { flex: 1; min-width: 0; display: flex; flex-direction: column; }
.tabs { height: 37px; flex: none; display: flex; background: #262626; border-bottom: 1px solid #2d2d2d; }
.tab { display: flex; align-items: center; width: 297px; padding: 2px 8px 0 12px; background: #323232; border-right: 1px solid #222; justify-content: space-between; }
.tab span { white-space: pre; }
.view { flex: 1; min-height: 0; display: flex; }
.canvas { flex: 1; padding-left: 391px; overflow: hidden; background: #383838; color: #fff; font: 300 23px/56px "Noto Sans CJK SC", sans-serif; }
.canvas p { margin: 0; white-space: nowrap; }
.canvas p:first-child { margin-top: -29px; }
.canvas u { text-decoration-thickness: 1px; text-underline-offset: 4px; }
.scroll-v { width: 22px; display: flex; flex-direction: column; align-items: center; padding-top: 8px; background: #2a2a2a; border-right: 2px solid #202020; color: #777; }
.scroll-v::before { content: ""; order: 1; flex: 564; }
.scroll-v i { order: 2; width: 19px; height: 32px; border-radius: 9px; background: #404040; }
.scroll-v::after { content: ""; order: 3; flex: 334; }

/* status */
.status { height: 19px; flex: none; display: flex; align-items: flex-start; overflow: hidden; padding-left: 4px; }
.status .combo { height: 24px; }
.status .combo + .nav { margin-left: 7px; }
.status .nav + .combo { margin-left: 4px; }
.nav { width: 20px; height: 24px; fill: #606060; }
.current { width: 252px; height: 20px; margin-left: 4px; padding-top: 4px; text-align: center; line-height: 16px; color: #999; border: solid #282828; border-width: 0 1px; font-size: 14px; }
.play { width: 21px; height: 24px; fill: #c0c0c0; }
.scroll-h { flex: 1; height: 20px; display: flex; align-items: center; padding-left: 8px; background: #2a2a2a; }
.scroll-h i { width: 32px; height: 18px; margin-left: 275px; border-radius: 9px; background: #404040; }
.bottom { height: 3px; flex: none; display: flex; gap: 465px; padding: 1px 0 1px 60px; background: #232323; }
.bottom i { width: 430px; background: #666; }
.bottom i + i { width: 200px; }

/* dock */
.dock { width: 49px; flex: none; border-right: 1px solid #262626; }
.dock .collapse { width: 100%; justify-content: flex-end; padding-right: 8px; }
.group { padding-bottom: 3px; border-bottom: 1px solid #202020; }
.group .grip { margin: 0 auto; position: relative; top: 4px; height: 5px; }
.group .grip + button { margin-top: 7px; }
.group button { width: 100%; height: 35px; }
.group svg { width: 49px; height: 35px; }

/* ime */
.ime { position: fixed; right: 6px; bottom: 6px; height: 60px; display: flex; background: #fff; border: 1px solid #22577f; color: #000; font-family: "Noto Sans CJK SC", sans-serif; font-size: 25px; }
.ime button { padding: 2px 21px 0; gap: 6px; }
.ime b { font-weight: 400; font-size: 20px; color: #888; padding-top: 3px; }
.ime .active { background: #22577f; color: #fff; }
.ime .active b { color: #fff; }
.ime .smile { width: 60px; padding: 0; border-left: 1px solid #22577f; }
```
